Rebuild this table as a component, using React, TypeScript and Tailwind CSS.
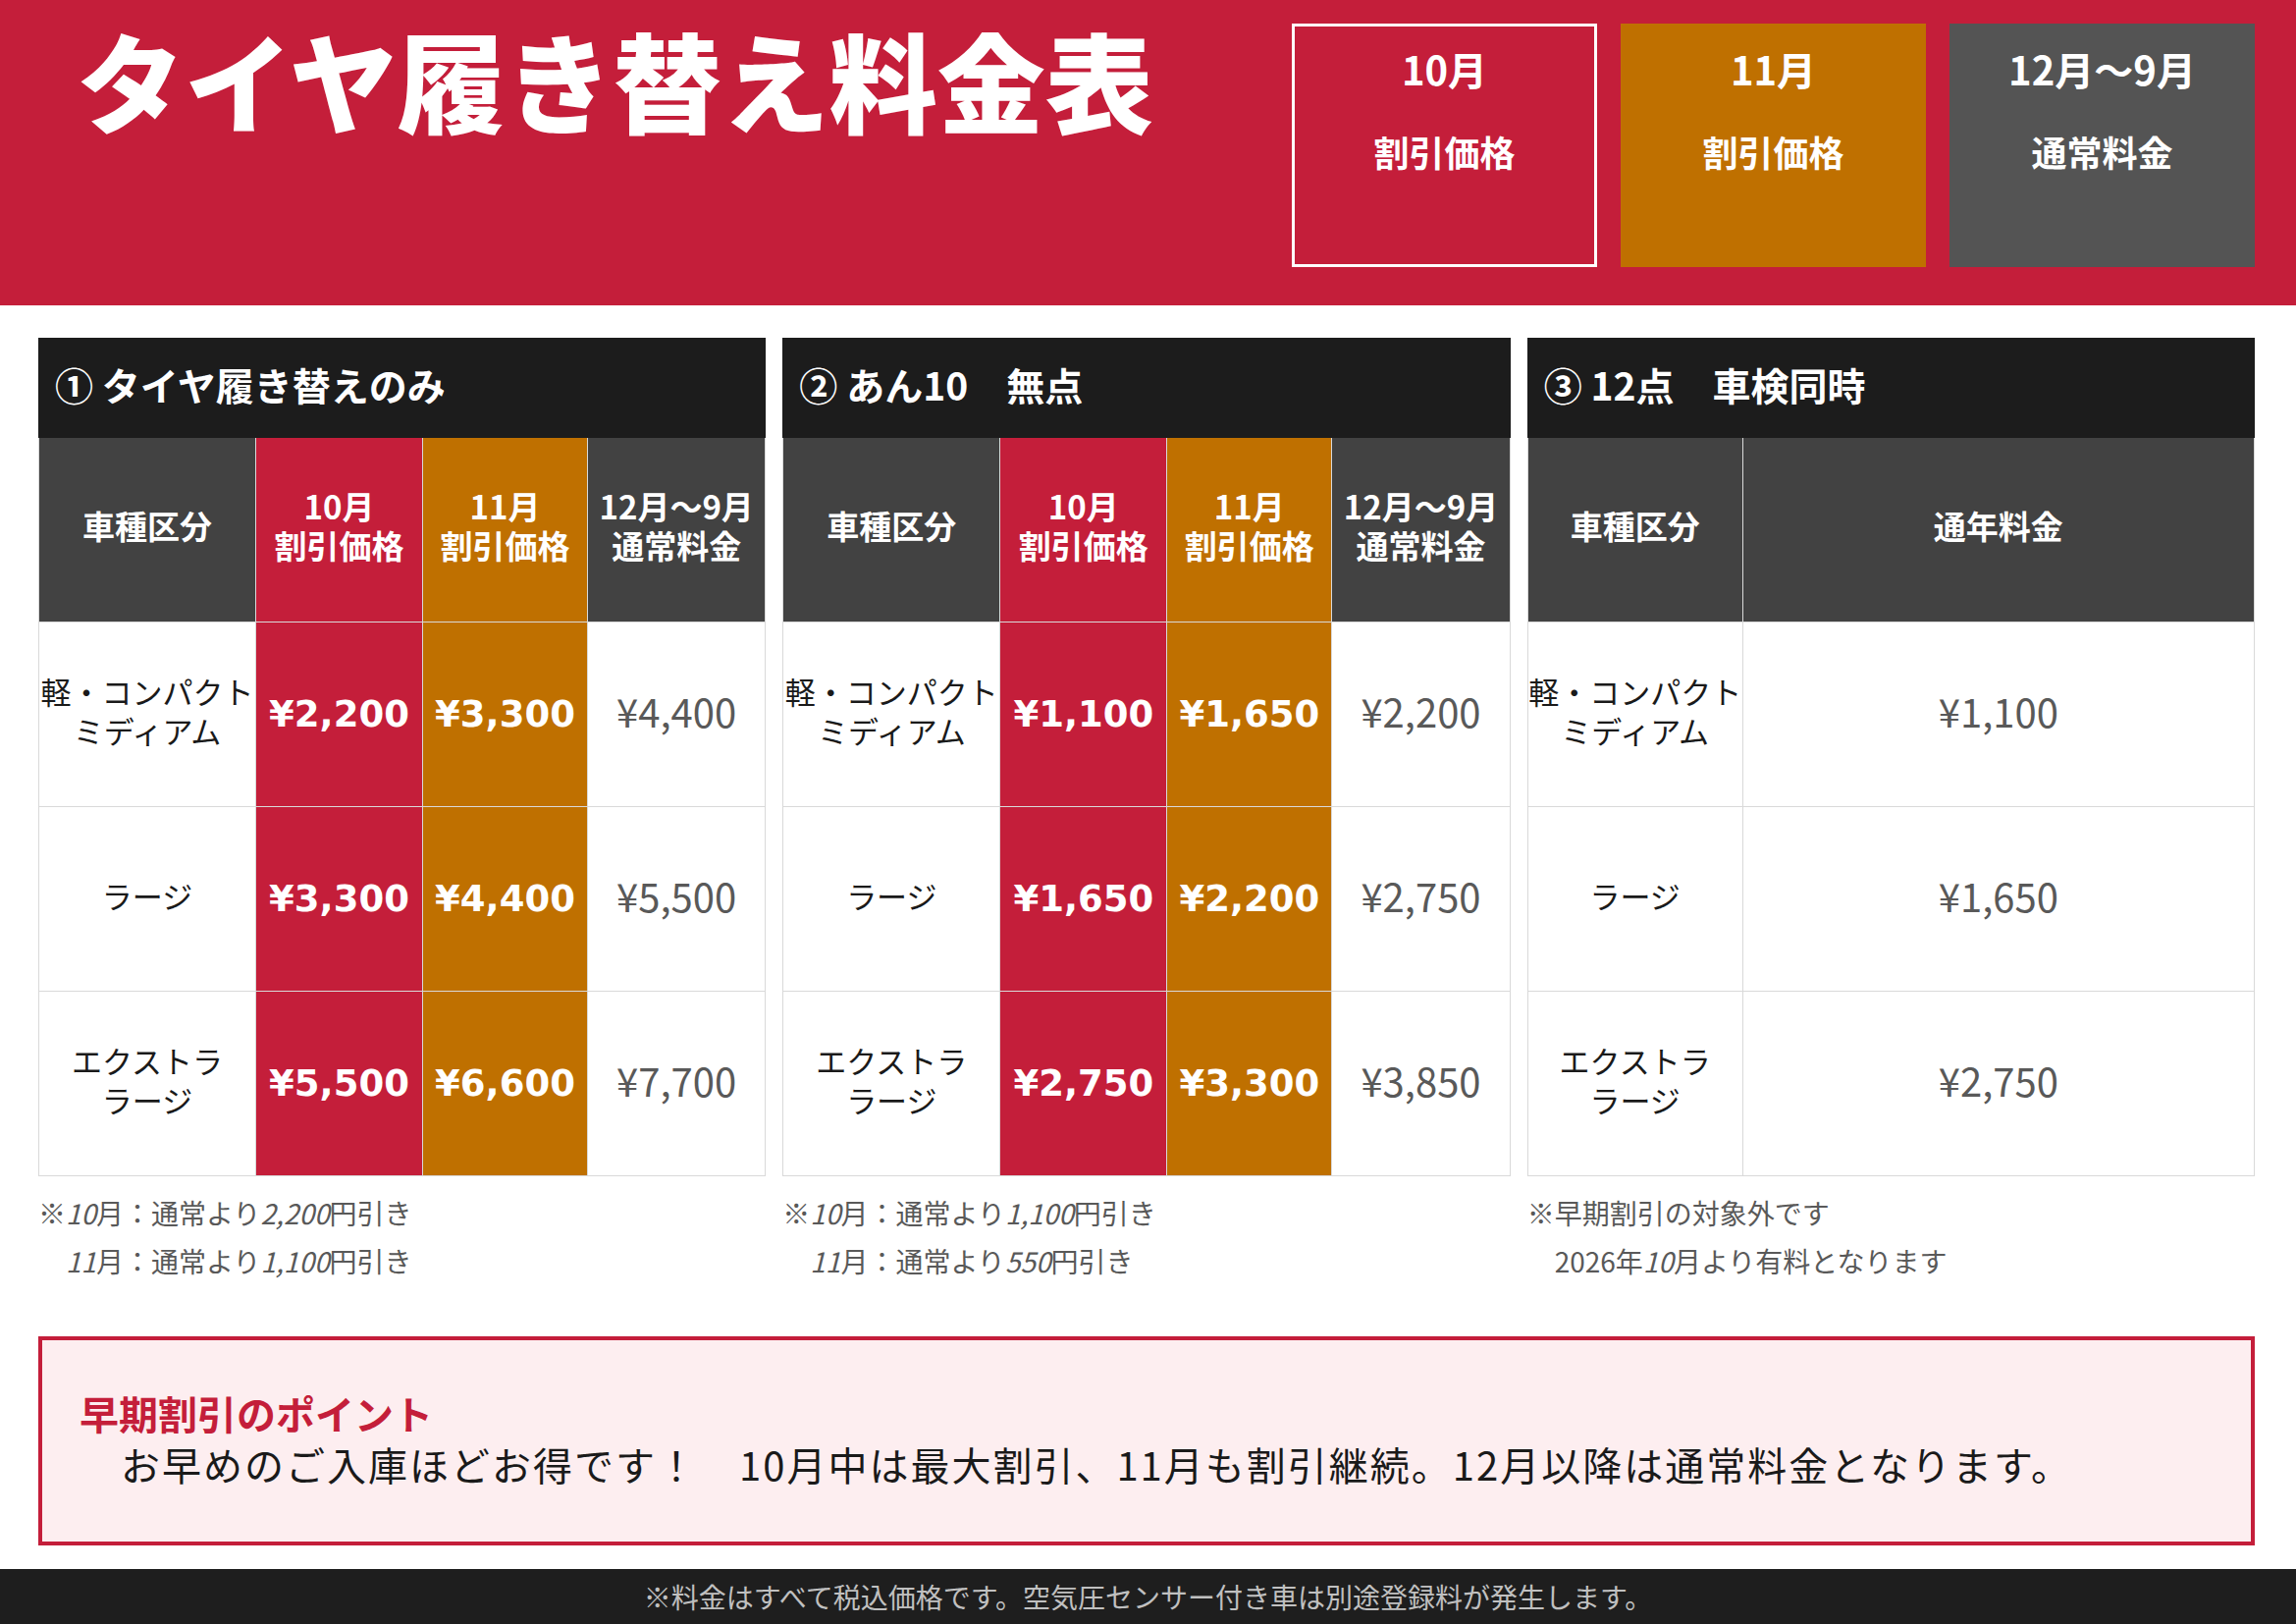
import { ReactNode } from "react";

type PriceRow = {
  label: string[];
  prices: string[];
};

type TableProps = {
  title: string;
  cols: "four" | "two";
  rows: PriceRow[];
  notes: ReactNode[];
};

const jp = "font-['Noto_Sans_CJK_JP','Noto_Sans',sans-serif]";

const headerBoxes = [
  { top: "10月", bottom: "割引価格", cls: "bg-[#c41e3a] border-[3px] border-white pt-[21px]" },
  { top: "11月", bottom: "割引価格", cls: "bg-[#bf7000] pt-[24px]" },
  { top: "12月～9月", bottom: "通常料金", cls: "bg-[#545454] pt-[24px]" },
];

const cell = "flex items-center justify-center text-center border-r border-b border-[#d9d9d9]";

const HeadCell = ({ lines, color }: { lines: string[]; color: string }) => (
  <div className={`${cell} ${color} flex-col pb-[10px] text-white text-[33px] font-bold leading-[40px]`}>
    {lines.map((l) => (
      <span key={l}>{l}</span>
    ))}
  </div>
);

const PriceTable = ({ title, cols, rows, notes }: TableProps) => {
  const grid =
    cols === "four"
      ? "grid grid-cols-[221px_170px_168px_1fr]"
      : "grid grid-cols-[219px_1fr]";

  return (
    <div className="flex flex-col">
      <div className="h-[102px] bg-[#1c1c1c] flex items-center pl-[17px] pb-[8px] text-white text-[39px] font-bold">
        {title}
      </div>
      <div className={`${grid} auto-rows-[188px] border-l border-[#d9d9d9]`}>
        <HeadCell lines={["車種区分"]} color="bg-[#424242]" />
        {cols === "four" ? (
          <>
            <HeadCell lines={["10月", "割引価格"]} color="bg-[#c41e3a]" />
            <HeadCell lines={["11月", "割引価格"]} color="bg-[#bf7000]" />
            <HeadCell lines={["12月～9月", "通常料金"]} color="bg-[#424242]" />
          </>
        ) : (
          <HeadCell lines={["通年料金"]} color="bg-[#424242]" />
        )}

        {rows.map((row) => (
          <div key={row.label.join()} className="contents">
            <div className={`${cell} bg-white flex-col pb-[8px] text-[31px] leading-[40px] text-[#1a1a1a]`}>
              {row.label.map((l) => (
                <span key={l} className="whitespace-nowrap">
                  {l}
                </span>
              ))}
            </div>
            {cols === "four" ? (
              <>
                <div className={`${cell} bg-[#c41e3a] text-white text-[37px] font-bold font-['DejaVu_Sans',sans-serif]`}>
                  {row.prices[0]}
                </div>
                <div className={`${cell} bg-[#bf7000] text-white text-[37px] font-bold font-['DejaVu_Sans',sans-serif]`}>
                  {row.prices[1]}
                </div>
                <div className={`${cell} bg-white pb-[7px] text-[#595959] text-[40px]`}>{row.prices[2]}</div>
              </>
            ) : (
              <div className={`${cell} bg-white pb-[7px] text-[#595959] text-[40px]`}>{row.prices[0]}</div>
            )}
          </div>
        ))}
      </div>
      <div className="mt-[13px] text-[28px] leading-[49px] text-[#595959]">
        {notes.map((n, i) => (
          <p key={i} className={i > 0 ? "pl-[28px]" : ""}>
            {n}
          </p>
        ))}
      </div>
    </div>
  );
};

export default function App() {
  return (
    <div className={`w-[2339px] h-[1654px] bg-white flex flex-col ${jp}`}>
      <header className="h-[311px] shrink-0 bg-[#c41e3a] flex justify-between items-start pl-[78px] pr-[42px] pt-[24px]">
        <h1 className="mt-[1px] text-[110px] font-black leading-none text-white">タイヤ履き替え料金表</h1>
        <div className="flex gap-[24px]">
          {headerBoxes.map((b) => (
            <div
              key={b.top}
              className={`w-[311px] h-[248px] flex flex-col items-center text-white font-bold ${b.cls}`}
            >
              <span className="text-[40px] leading-[44px]">{b.top}</span>
              <span className="mt-[40px] text-[36px] leading-[44px]">{b.bottom}</span>
            </div>
          ))}
        </div>
      </header>

      <main className="pl-[39px] pr-[42px] pt-[33px]">
        <div className="grid grid-cols-3 gap-x-[17px]">
          <PriceTable
            title="① タイヤ履き替えのみ"
            cols="four"
            rows={[
              { label: ["軽・コンパクト", "ミディアム"], prices: ["¥2,200", "¥3,300", "¥4,400"] },
              { label: ["ラージ"], prices: ["¥3,300", "¥4,400", "¥5,500"] },
              { label: ["エクストラ", "ラージ"], prices: ["¥5,500", "¥6,600", "¥7,700"] },
            ]}
            notes={[
              <>※<i>10</i>月：通常より<i>2,200</i>円引き</>,
              <><i>11</i>月：通常より<i>1,100</i>円引き</>,
            ]}
          />
          <PriceTable
            title="② あん10　無点"
            cols="four"
            rows={[
              { label: ["軽・コンパクト", "ミディアム"], prices: ["¥1,100", "¥1,650", "¥2,200"] },
              { label: ["ラージ"], prices: ["¥1,650", "¥2,200", "¥2,750"] },
              { label: ["エクストラ", "ラージ"], prices: ["¥2,750", "¥3,300", "¥3,850"] },
            ]}
            notes={[
              <>※<i>10</i>月：通常より<i>1,100</i>円引き</>,
              <><i>11</i>月：通常より<i>550</i>円引き</>,
            ]}
          />
          <PriceTable
            title="③ 12点　車検同時"
            cols="two"
            rows={[
              { label: ["軽・コンパクト", "ミディアム"], prices: ["¥1,100"] },
              { label: ["ラージ"], prices: ["¥1,650"] },
              { label: ["エクストラ", "ラージ"], prices: ["¥2,750"] },
            ]}
            notes={[
              <>※早期割引の対象外です</>,
              <>2026年<i>10</i>月より有料となります</>,
            ]}
          />
        </div>

        <section className="mt-[52px] h-[213px] border-[4px] border-[#c41e3a] bg-[#fdeef0] pl-[38px] pt-[48px]">
          <h2 className="text-[40px] font-bold leading-[52px] text-[#c41e3a]">早期割引のポイント</h2>
          <p className="pl-[42px] text-[40px] leading-[52px] tracking-[2px] text-[#1a1a1a]">
            {"お早めのご入庫ほどお得です！　10月中は最大割引、11月も割引継続。12月以降は通常料金となります。"}
          </p>
        </section>
      </main>

      <footer className="mt-auto h-[56px] bg-[#1e1e1e] flex items-center justify-center text-[28px] text-[#c0c0c0]">
        ※料金はすべて税込価格です。空気圧センサー付き車は別途登録料が発生します。
      </footer>
    </div>
  );
}
